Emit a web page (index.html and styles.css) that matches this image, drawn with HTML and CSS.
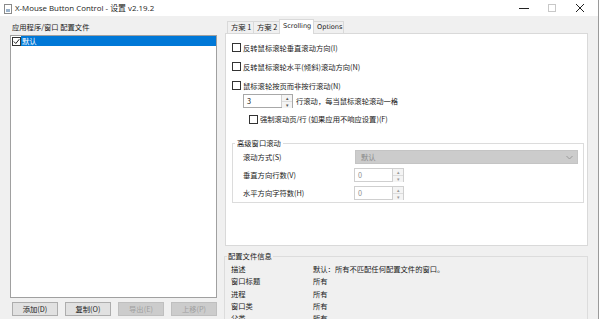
FILE: index.html
```html
<!DOCTYPE html>
<html lang="zh-CN">
<head>
<meta charset="utf-8">
<title>X-Mouse Button Control - 设置 v2.19.2</title>
<link rel="stylesheet" href="styles.css">
</head>
<body>
<div class="window">
  <div class="titlebar">
    <svg class="app-icon" width="8" height="10" viewBox="0 0 8 10"><rect x="0.5" y="0.5" width="7" height="9" fill="#fff" stroke="#8a8a8a"/><rect x="2" y="5" width="4" height="3" fill="#9bb3cc"/></svg>
    <span class="title">X-Mouse Button Control - 设置 v2.19.2</span>
    <div class="controls">
      <svg class="ctl" width="28" height="16" viewBox="0 0 28 16"><line x1="9" y1="8.5" x2="19" y2="8.5" stroke="#222" stroke-width="1"/></svg>
      <svg class="ctl" width="28" height="16" viewBox="0 0 28 16"><rect x="10.5" y="4.5" width="7" height="7" fill="none" stroke="#c8c8c8"/></svg>
      <svg class="ctl" width="28" height="16" viewBox="0 0 28 16"><path d="M10 4 L18 12 M18 4 L10 12" stroke="#222" stroke-width="1"/></svg>
    </div>
  </div>
  <div class="content">
    <div class="left">
      <div class="left-label">应用程序/窗口 配置文件</div>
      <div class="list">
        <div class="list-item">
          <span class="cb cb-checked"><svg width="7" height="7" viewBox="0 0 7 7"><path d="M0.8 3.5 L2.8 5.5 L6.3 1.2" fill="none" stroke="#222" stroke-width="1"/></svg></span>
          <span class="item-text">默认</span>
        </div>
      </div>
      <div class="buttons">
        <button class="btn">添加(D)</button>
        <button class="btn">复制(O)</button>
        <button class="btn" disabled>导出(E)</button>
        <button class="btn" disabled>上移(P)</button>
      </div>
    </div>
    <div class="right">
      <div class="tabs">
        <div class="tab">方案 1</div>
        <div class="tab">方案 2</div>
        <div class="tab tab-active">Scrolling</div>
        <div class="tab">Options</div>
      </div>
      <div class="panel">
        <div class="row row-first"><span class="cb"></span><span>反转鼠标滚轮垂直滚动方向(I)</span></div>
        <div class="row"><span class="cb"></span><span>反转鼠标滚轮水平(倾斜)滚动方向(N)</span></div>
        <div class="row"><span class="cb"></span><span>鼠标滚轮按页而非按行滚动(N)</span></div>
        <div class="spin-row">
          <div class="spin spin-main"><span class="spin-val">3</span><span class="spin-btns"><span class="sb">&#9652;</span><span class="sb">&#9662;</span></span></div>
          <span class="spin-label">行滚动，每当鼠标滚轮滚动一格</span>
        </div>
        <div class="row row-sub"><span class="cb"></span><span>强制滚动页/行 (如果应用不响应设置)(F)</span></div>
        <fieldset class="group">
          <legend>高级窗口滚动</legend>
          <div class="grow">
            <span class="glabel">滚动方式(S)</span>
            <div class="combo"><span>默认</span><svg width="7" height="5" viewBox="0 0 7 5"><path d="M0.5 1 L3.5 4 L6.5 1" fill="none" stroke="#999"/></svg></div>
          </div>
          <div class="grow">
            <span class="glabel">垂直方向行数(V)</span>
            <div class="spin spin-dis"><span class="spin-val">0</span><span class="spin-btns"><span class="sb">&#9652;</span><span class="sb">&#9662;</span></span></div>
          </div>
          <div class="grow">
            <span class="glabel">水平方向字符数(H)</span>
            <div class="spin spin-dis"><span class="spin-val">0</span><span class="spin-btns"><span class="sb">&#9652;</span><span class="sb">&#9662;</span></span></div>
          </div>
        </fieldset>
      </div>
      <fieldset class="info">
        <legend>配置文件信息</legend>
        <div class="info-grid">
          <span>描述</span><span>默认：所有不匹配任何配置文件的窗口。</span>
          <span>窗口标题</span><span>所有</span>
          <span>进程</span><span>所有</span>
          <span>窗口类</span><span>所有</span>
          <span>父类</span><span>所有</span>
        </div>
      </fieldset>
    </div>
  </div>
</div>
</body>
</html>
```

FILE: styles.css
```css
* { box-sizing: border-box; }
html, body { margin: 0; padding: 0; }
body {
  font-family: "Noto Sans CJK SC", "Noto Sans", sans-serif;
  font-size: 7.3px;
  color: #1a1a1a;
  background: #f0f0f0;
}
.window {
  width: 599px;
  height: 319px;
  overflow: hidden;
  background: #f0f0f0;
  display: flex;
  flex-direction: column;
  border-right: 1px solid #9a9a9a;
}
.titlebar {
  height: 16px;
  flex: none;
  background: #fff;
  display: flex;
  align-items: center;
}
.app-icon { margin-left: 4px; margin-top: 1px; }
.title {
  margin-left: 3px;
  font-family: "Open Sans", "Noto Sans CJK SC", sans-serif;
  font-size: 7.9px;
  color: #222;
  line-height: 16px;
}
.controls { margin-left: auto; display: flex; margin-right: 4px; }
.ctl { display: block; }

.content { flex: 1; display: flex; }

.left {
  width: 207px;
  margin-left: 10px;
  display: flex;
  flex-direction: column;
}
.left-label {
  height: 19px;
  padding-top: 4px;
  line-height: 15px;
  padding-left: 2px;
}
.list {
  height: 263px;
  background: #fff;
  border: 1px solid #a0a0a0;
  padding: 0;
}
.list-item {
  display: flex;
  align-items: center;
  height: 10px;
  padding-left: 1px;
}
.list-item .cb { margin-right: 0; }
.item-text {
  flex: 1;
  background: #0078d7;
  color: #fff;
  height: 10px;
  line-height: 10px;
  padding-left: 1px;
}
.cb {
  width: 9px;
  height: 9px;
  border: 1px solid #333;
  background: #fff;
  display: inline-flex;
  align-items: center;
  justify-content: center;
  flex: none;
  margin-right: 2px;
}
.buttons {
  margin-top: 4px;
  padding-left: 2px;
  display: flex;
  justify-content: space-between;
}
.btn {
  width: 46px;
  height: 14px;
  padding: 0;
  margin: 0;
  font-family: inherit;
  font-size: 7.3px;
  color: #1a1a1a;
  background: #e1e1e1;
  border: 1px solid #adadad;
  line-height: 12px;
}
.btn:disabled { color: #a0a0a0; background: #cccccc; border-color: #bfbfbf; }

.right {
  width: 364px;
  margin-left: 7px;
  display: flex;
  flex-direction: column;
}
.tabs {
  margin-top: 3px;
  height: 14px;
  display: flex;
  align-items: flex-end;
  padding-left: 3px;
  position: relative;
  z-index: 1;
}
.tab {
  height: 12px;
  line-height: 11px;
  padding: 0 3px;
  border: 1px solid #d9d9d9;
  border-bottom: none;
  background: #f0f0f0;
  margin-right: -1px;
  font-size: 7.3px;
  white-space: nowrap;
}
.tab:nth-child(1) { width: 27px; }
.tab:nth-child(2) { width: 27px; }
.tab-active {
  height: 15px;
  width: 35px;
  margin-bottom: -1px;
  background: #fff;
  line-height: 13px;
  font-family: "DejaVu Sans", sans-serif;
  font-size: 6.6px;
  padding: 0 3px;
}
.tab:nth-child(4) {
  width: 31px;
  font-family: "DejaVu Sans", sans-serif;
  font-size: 6.6px;
}
.panel {
  margin-left: 1px;
  width: 363px;
  height: 213px;
  background: #fff;
  border: 1px solid #d9d9d9;
  padding-left: 6px;
  padding-right: 3px;
  display: flex;
  flex-direction: column;
}
.row {
  height: 19px;
  display: flex;
  align-items: center;
}
.row-first { margin-top: 4px; }
.spin-row {
  margin-top: -1px;
  height: 14px;
  display: flex;
  align-items: center;
  padding-left: 11px;
}
.spin {
  width: 50px;
  height: 14px;
  border: 1px solid #a8a8a8;
  background: #fff;
  display: flex;
  align-items: stretch;
}
.spin-main { width: 50px; }
.spin-val { flex: 1; padding-left: 3px; line-height: 12px; }
.spin-btns {
  width: 11px;
  display: flex;
  flex-direction: column;
  border-left: 1px solid #d0d0d0;
}
.sb {
  flex: 1;
  font-size: 5px;
  line-height: 6px;
  text-align: center;
  color: #555;
  background: #f4f4f4;
}
.sb + .sb { border-top: 1px solid #dcdcdc; }
.spin-label { margin-left: 3px; }
.row-sub { height: 14px; margin-top: 4px; padding-left: 17px; }

.group {
  margin: 10px 0 0 0;
  padding: 0 5px 2px 2px;
  border: 1px solid #dcdcdc;
  min-width: 0;
  width: 352px;
}
.group legend {
  padding: 0 2px;
  margin-left: 0;
  line-height: 14px;
  height: 14px;
}
.grow {
  height: 14px;
  display: flex;
  align-items: center;
  margin-bottom: 4px;
  padding-left: 8px;
}
.grow:last-child { margin-bottom: 0; }
.glabel { width: 111px; flex: none; }
.combo {
  flex: 1;
  height: 14px;
  background: #cccccc;
  border: 1px solid #c4c4c4;
  color: #8a8a8a;
  display: flex;
  align-items: center;
  justify-content: space-between;
  padding: 0 4px 0 5px;
  margin-left: 1px;
}
.spin-dis { color: #909090; border-color: #cfcfcf; }
.spin-dis .sb { color: #999; }

.info {
  margin: 3px 0 0 0;
  padding: 0 0 0 2px;
  border: 1px solid #dcdcdc;
  min-width: 0;
  width: 364px;
  flex: 1;
}
.info legend {
  padding: 0 1px;
  margin-left: 0;
  line-height: 14px;
  height: 14px;
}
.info-grid {
  display: grid;
  grid-template-columns: 82px 1fr;
  grid-auto-rows: 12.3px;
  line-height: 12.3px;
  padding-left: 4px;
}
```
